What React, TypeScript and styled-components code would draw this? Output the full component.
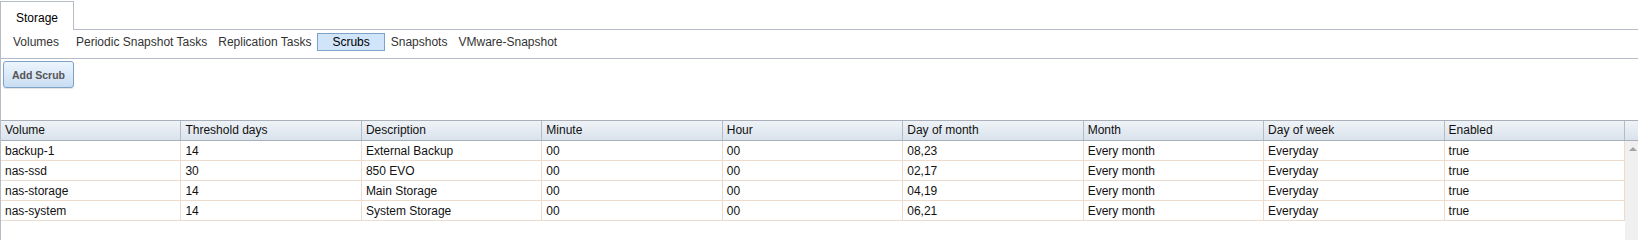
import React from "react";
import styled, { createGlobalStyle } from "styled-components";

const GlobalStyle = createGlobalStyle`
  html, body {
    margin: 0;
    padding: 0;
    background: #ffffff;
    overflow: hidden;
  }
  body {
    font-family: "Liberation Sans", Arial, sans-serif;
    font-size: 12px;
    color: #000;
  }
`;

const LINE = "#b5bcc7";
const PEACH = "#eddccb";

const Page = styled.div`
  width: 1638px;
  height: 240px;
  display: flex;
  flex-direction: column;
`;

const TopBar = styled.div`
  display: flex;
  height: 30px;
`;

const TopTab = styled.div`
  margin-top: 1px;
  padding: 3px 15px 0 15px;
  display: flex;
  align-items: center;
  border: 1px solid ${LINE};
  border-bottom: none;
  background: #fff;
  color: #000;
`;

const TopFiller = styled.div`
  flex: 1;
  border-bottom: 1px solid ${LINE};
`;

const Frame = styled.div`
  flex: 1;
  display: flex;
  flex-direction: column;
  border-left: 1px solid ${LINE};
`;

const SubTabs = styled.div`
  display: flex;
  align-items: flex-start;
  gap: 1px;
  height: 29px;
  padding: 3px 0 0 4px;
  box-sizing: border-box;
  border-bottom: 1px solid ${LINE};
`;

const SubTab = styled.div<{ $active?: boolean; $first?: boolean }>`
  height: 18px;
  line-height: 17px;
  box-sizing: border-box;
  padding: ${(p) => (p.$active ? "0 14px" : p.$first ? "0 10px 0 7px" : "0 4px")};
  color: ${(p) => (p.$active ? "#000" : "#333")};
  border: 1px solid ${(p) => (p.$active ? "#7fa3c6" : "transparent")};
  background: ${(p) => (p.$active ? "#d0e5fa" : "transparent")};
  white-space: nowrap;
  cursor: pointer;
`;

const Toolbar = styled.div`
  display: flex;
  padding: 2px 0 0 2px;
`;

const ActionButton = styled.button`
  width: 71px;
  height: 27px;
  padding: 0;
  font-family: "Liberation Sans", Arial, sans-serif;
  font-size: 10.5px;
  font-weight: bold;
  color: #555;
  border: 1px solid #7fa3c8;
  border-radius: 3px;
  background: linear-gradient(#edf5fd, #c9ddf2);
  box-shadow: 0 1px 1px rgba(0, 0, 0, 0.12);
  cursor: pointer;
`;

const Grid = styled.div`
  margin-top: 32px;
  display: flex;
  flex-direction: column;
  flex: 1;
`;

const HeaderRow = styled.div`
  display: grid;
  grid-template-columns: repeat(9, 1fr) 13px;
  height: 21px;
  box-sizing: border-box;
  border-top: 1px solid #a9b0ba;
  border-bottom: 1px solid #a9b0ba;
  background: linear-gradient(#eff3f7, #d9e2ec);
`;

const HeadCell = styled.div`
  padding: 0 4px;
  line-height: 19px;
  border-right: 1px solid #b4bbc5;
  color: #111;
  white-space: nowrap;
  overflow: hidden;
  &:last-child {
    border-right: none;
  }
`;

const Body = styled.div`
  display: flex;
  flex: 1;
`;

const Rows = styled.div`
  flex: 1;
  display: flex;
  flex-direction: column;
`;

const Row = styled.div`
  display: grid;
  grid-template-columns: repeat(9, 1fr);
  height: 20px;
  box-sizing: border-box;
  border-bottom: 1px solid ${PEACH};
`;

const Cell = styled.div`
  padding: 2px 4px 0 4px;
  line-height: 17px;
  border-right: 1px solid ${PEACH};
  color: #111;
  white-space: nowrap;
  overflow: hidden;
`;

const Scrollbar = styled.div`
  width: 13px;
  background: #f0f0f0;
  display: flex;
  justify-content: flex-end;
  padding-top: 6px;
  box-sizing: border-box;
`;

const ArrowUp = styled.div`
  width: 0;
  height: 0;
  margin-right: 1px;
  border-left: 4px solid transparent;
  border-right: 4px solid transparent;
  border-bottom: 4px solid #a3a3a3;
`;

const subTabs = [
  "Volumes",
  "Periodic Snapshot Tasks",
  "Replication Tasks",
  "Scrubs",
  "Snapshots",
  "VMware-Snapshot",
];

const columns = [
  "Volume",
  "Threshold days",
  "Description",
  "Minute",
  "Hour",
  "Day of month",
  "Month",
  "Day of week",
  "Enabled",
];

const scrubs = [
  ["backup-1", "14", "External Backup", "00", "00", "08,23", "Every month", "Everyday", "true"],
  ["nas-ssd", "30", "850 EVO", "00", "00", "02,17", "Every month", "Everyday", "true"],
  ["nas-storage", "14", "Main Storage", "00", "00", "04,19", "Every month", "Everyday", "true"],
  ["nas-system", "14", "System Storage", "00", "00", "06,21", "Every month", "Everyday", "true"],
];

const App = () => {
  return (
    <Page>
      <GlobalStyle />
      <TopBar>
        <TopTab>Storage</TopTab>
        <TopFiller />
      </TopBar>
      <Frame>
        <SubTabs>
          {subTabs.map((t, i) => (
            <SubTab key={t} $first={i === 0} $active={t === "Scrubs"}>
              {t}
            </SubTab>
          ))}
        </SubTabs>
        <Toolbar>
          <ActionButton>Add Scrub</ActionButton>
        </Toolbar>
        <Grid>
          <HeaderRow>
            {columns.map((c) => (
              <HeadCell key={c}>{c}</HeadCell>
            ))}
            <HeadCell />
          </HeaderRow>
          <Body>
            <Rows>
              {scrubs.map((r) => (
                <Row key={r[0]}>
                  {r.map((v, i) => (
                    <Cell key={i}>{v}</Cell>
                  ))}
                </Row>
              ))}
            </Rows>
            <Scrollbar>
              <ArrowUp />
            </Scrollbar>
          </Body>
        </Grid>
      </Frame>
    </Page>
  );
};

export default App;
